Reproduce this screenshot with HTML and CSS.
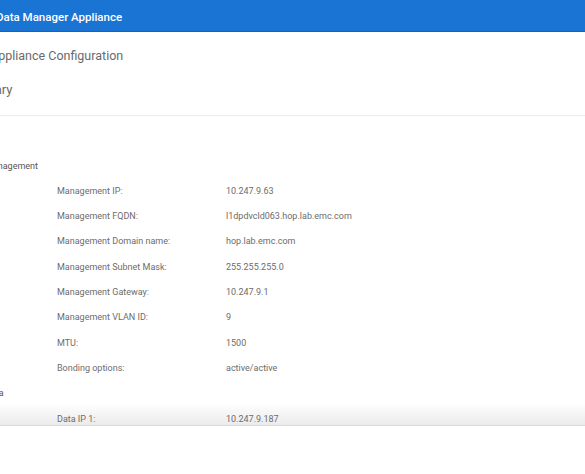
FILE: index.html
```html
<!DOCTYPE html>
<html lang="en">
<head>
<meta charset="utf-8">
<title>Data Manager Appliance</title>
<link rel="stylesheet" href="styles.css">
</head>
<body>
<div class="app">
  <header class="appbar">
    <span class="appbar-title">Data Manager Appliance</span>
  </header>
  <main class="viewport">
    <div class="page">
      <h1 class="page-title">Appliance Configuration</h1>
      <h2 class="step-title">Summary</h2>
      <section class="summary">
        <div class="group-title">Management</div>
        <div class="row"><span class="label">Management IP:</span><span class="value">10.247.9.63</span></div>
        <div class="row"><span class="label">Management FQDN:</span><span class="value">l1dpdvcld063.hop.lab.emc.com</span></div>
        <div class="row"><span class="label">Management Domain name:</span><span class="value">hop.lab.emc.com</span></div>
        <div class="row"><span class="label">Management Subnet Mask:</span><span class="value">255.255.255.0</span></div>
        <div class="row"><span class="label">Management Gateway:</span><span class="value">10.247.9.1</span></div>
        <div class="row"><span class="label">Management VLAN ID:</span><span class="value">9</span></div>
        <div class="row"><span class="label">MTU:</span><span class="value">1500</span></div>
        <div class="row"><span class="label">Bonding options:</span><span class="value">active/active</span></div>
        <div class="group-title">Data</div>
        <div class="row"><span class="label">Data IP 1:</span><span class="value">10.247.9.187</span></div>
        <div class="row"><span class="label">Data FQDN 1:</span><span class="value">l1dpdvcld063-d1.hop.lab.emc.com</span></div>
      </section>
    </div>
    <div class="shade"></div>
  </main>
  <footer class="footer"></footer>
</div>
</body>
</html>
```
FILE: styles.css
```css
html, body {
  margin: 0;
  padding: 0;
  background: #ffffff;
}
body {
  width: 585px;
  height: 474px;
  overflow: hidden;
  font-family: Roboto, "Noto Sans", "Liberation Sans", sans-serif;
}
.app {
  display: flex;
  flex-direction: column;
  height: 474px;
}
.appbar {
  height: 32px;
  box-sizing: border-box;
  padding-top: 2px;
  flex: 0 0 auto;
  background: #1a74d4;
  border-bottom: 1px solid #1463bd;
  display: flex;
  align-items: center;
}
.appbar-title {
  margin-left: -4px;
  color: #ffffff;
  font-size: 11.5px;
  font-weight: 500;
  white-space: nowrap;
}
.viewport {
  position: relative;
  height: 394px;
  flex: 0 0 auto;
  overflow: hidden;
}
.page {
  position: relative;
  z-index: 1;
  margin-left: -15px;
}
.page-title {
  margin: 13px 0 0 5px;
  font-size: 12.5px;
  line-height: 22px;
  font-weight: 400;
  color: #6a6a6a;
  white-space: nowrap;
}
.step-title {
  margin: 12px 0 0 0;
  padding: 0 0 14px 0;
  line-height: 22px;
  font-size: 13px;
  font-weight: 400;
  color: #6a6a6a;
  border-bottom: 1px solid #ececec;
  text-indent: -28px;
  white-space: nowrap;
}
.summary {
  padding-top: 37.5px;
  font-size: 9px;
}
.group-title {
  height: 25.33px;
  line-height: 25.33px;
  color: #555555;
  white-space: nowrap;
}
.row {
  display: grid;
  grid-template-columns: 169px 1fr;
  height: 25.33px;
  line-height: 25.33px;
  padding-left: 72px;
  color: #6c6c6c;
  white-space: nowrap;
}
.shade {
  position: absolute;
  z-index: 0;
  left: 0;
  right: 0;
  bottom: 0;
  height: 22px;
  background: linear-gradient(to bottom, #ffffff 0%, #ebebeb 100%);
  border-bottom: 1px solid #dcdcdc;
}
.footer {
  flex: 1 1 auto;
  background: #ffffff;
}
```
